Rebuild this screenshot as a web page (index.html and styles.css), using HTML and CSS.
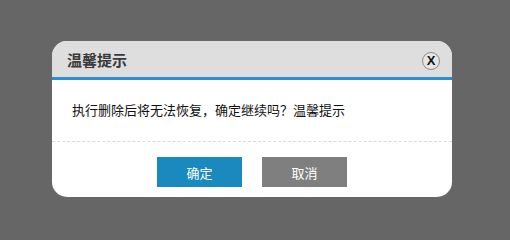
FILE: index.html
```html
<!DOCTYPE html>
<html lang="zh-CN">
<head>
<meta charset="utf-8">
<title>温馨提示</title>
<link rel="stylesheet" href="styles.css">
</head>
<body>
<div class="dialog">
  <div class="dialog-header">
    <span class="dialog-title">温馨提示</span>
    <span class="dialog-close">X</span>
  </div>
  <div class="dialog-body">执行删除后将无法恢复，确定继续吗？温馨提示</div>
  <div class="dialog-footer">
    <button class="btn btn-ok">确定</button>
    <button class="btn btn-cancel">取消</button>
  </div>
</div>
</body>
</html>
```

FILE: styles.css
```css
html, body {
  margin: 0;
  padding: 0;
  background: #666666;
}
body {
  padding: 41px 0 0 52px;
  font-family: "Noto Sans CJK SC", "Liberation Sans", sans-serif;
}
.dialog {
  width: 400px;
  background: #ffffff;
  border-radius: 15px;
  overflow: hidden;
}
.dialog-header {
  height: 36px;
  background: #dedede;
  border-bottom: 3px solid #2b8fd2;
  display: flex;
  align-items: center;
  justify-content: space-between;
  padding: 0 12px 0 15px;
}
.dialog-title {
  font-size: 15px;
  font-weight: bold;
  color: #3a3a3a;
  line-height: 20px;
  margin-top: 1px;
}
.dialog-close {
  width: 16px;
  height: 16px;
  border: 1px solid #8a8a8a;
  border-radius: 50%;
  background: #e6e6e6;
  display: flex;
  align-items: center;
  justify-content: center;
  font-family: "Liberation Sans", sans-serif;
  font-size: 13px;
  font-weight: bold;
  line-height: 16px;
  color: #111;
  margin-top: 3px;
}
.dialog-body {
  padding: 20px 20px 21px 20px;
  font-size: 13px;
  line-height: 20px;
  color: #111;
  border-bottom: 1px dashed #dcdcdc;
}
.dialog-footer {
  display: flex;
  justify-content: center;
  gap: 20px;
  padding: 15px 0 10px;
}
.btn {
  width: 85px;
  height: 30px;
  border: none;
  margin: 0;
  padding: 0;
  font-family: "Noto Sans CJK SC", "Liberation Sans", sans-serif;
  font-size: 13px;
  color: #ffffff;
}
.btn-ok {
  background: #1a89bd;
}
.btn-cancel {
  background: #7f7f7f;
}
```
